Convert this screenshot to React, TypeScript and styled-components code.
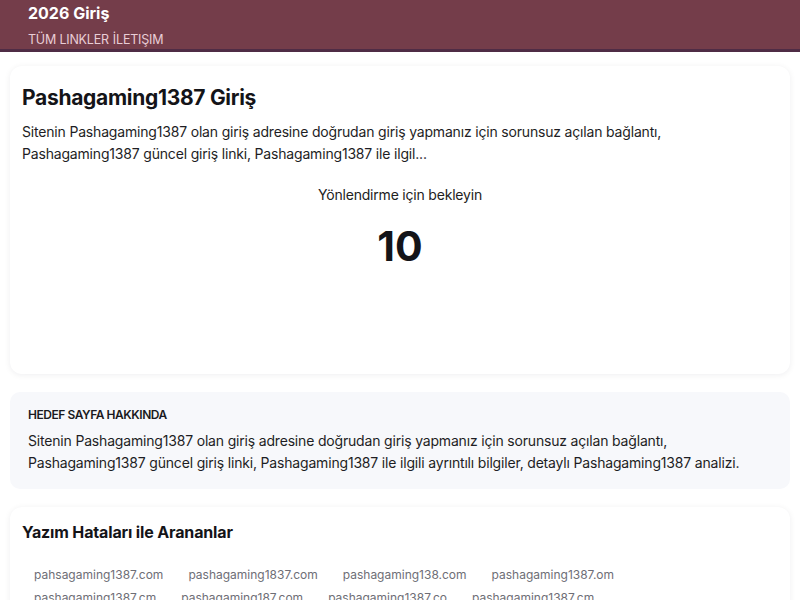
import styled, { createGlobalStyle } from "styled-components";

const GlobalStyle = createGlobalStyle`
  body {
    margin: 0;
    background: #fff;
    font-family: Inter, "Noto Sans", sans-serif;
    color: #1b1b1f;
  }
`;

const typoLinks = [
  "pahsagaming1387.com",
  "pashagaming1837.com",
  "pashagaming138.com",
  "pashagaming1387.om",
  "pashagaming1387.cm",
  "pashagaming187.com",
  "pashagaming1387.co",
  "pashagaming1387.cm",
];

const intro =
  "Sitenin Pashagaming1387 olan giriş adresine doğrudan giriş yapmanız için sorunsuz açılan bağlantı, Pashagaming1387 güncel giriş linki, Pashagaming1387 ile ilgil...";

const about =
  "Sitenin Pashagaming1387 olan giriş adresine doğrudan giriş yapmanız için sorunsuz açılan bağlantı, Pashagaming1387 güncel giriş linki, Pashagaming1387 ile ilgili ayrıntılı bilgiler, detaylı Pashagaming1387 analizi.";

const App = () => {
  return (
    <>
      <GlobalStyle />
      <StyledHeader>
        <StyledBrand>2026 Giriş</StyledBrand>
        <StyledNav>
          <StyledNavLink>Tüm Linkler</StyledNavLink>
          <StyledNavLink>İletişim</StyledNavLink>
        </StyledNav>
      </StyledHeader>

      <StyledMain>
        <StyledCard>
          <StyledTitle>Pashagaming1387 Giriş</StyledTitle>
          <StyledText>{intro}</StyledText>
          <StyledRedirect>
            <StyledWait>Yönlendirme için bekleyin</StyledWait>
            <StyledCounter>10</StyledCounter>
          </StyledRedirect>
        </StyledCard>

        <StyledInfoBox>
          <StyledLabel>Hedef Sayfa Hakkında</StyledLabel>
          <StyledText>{about}</StyledText>
        </StyledInfoBox>

        <StyledCard $compact>
          <StyledSubtitle>Yazım Hataları ile Arananlar</StyledSubtitle>
          <StyledTags>
            {typoLinks.map((link, i) => (
              <StyledTag key={i}>{link}</StyledTag>
            ))}
          </StyledTags>
        </StyledCard>
      </StyledMain>
    </>
  );
};

export default App;

const StyledHeader = styled.header`
  background: #743d4a;
  border-bottom: 3px solid #4f2c45;
  padding: 3px 28px 0;
  height: 46px;
  box-sizing: content-box;
`;

const StyledBrand = styled.div`
  color: #fff;
  font-size: 16px;
  font-weight: 700;
  line-height: 20px;
`;

const StyledNav = styled.nav`
  display: flex;
  gap: 4px;
  margin-top: 9px;
`;

const StyledNavLink = styled.a`
  color: #e9cdd6;
  font-size: 12.5px;
  text-transform: uppercase;
  line-height: 16px;
  letter-spacing: -0.2px;
`;

const StyledMain = styled.main`
  display: flex;
  flex-direction: column;
  gap: 18px;
  padding: 14px 10px 0;
`;

const StyledCard = styled.section<{ $compact?: boolean }>`
  background: #fff;
  border-radius: 12px;
  box-shadow: 0 1px 6px rgba(20, 20, 40, 0.07);
  padding: ${({ $compact }) => ($compact ? "13px 12px 12px" : "18px 12px 12px")};
`;

const StyledTitle = styled.h1`
  margin: 0 0 9px;
  font-size: 21px;
  font-weight: 700;
  line-height: 28px;
  letter-spacing: -0.3px;
  color: #141418;
`;

const StyledText = styled.p`
  margin: 0;
  max-width: 736px;
  font-size: 14px;
  line-height: 22px;
  letter-spacing: -0.18px;
  color: #1e1e24;
`;

const StyledRedirect = styled.div`
  display: flex;
  flex-direction: column;
  align-items: center;
  padding: 20px 0 90px;
`;

const StyledWait = styled.div`
  font-size: 14px;
  line-height: 20px;
  letter-spacing: -0.2px;
  color: #222;
`;

const StyledCounter = styled.div`
  margin-top: 15px;
  font-size: 41px;
  font-weight: 700;
  line-height: 52px;
  color: #141418;
`;

const StyledInfoBox = styled.section`
  background: #f7f8fb;
  border-radius: 10px;
  padding: 15px 18px 15px;
`;

const StyledLabel = styled.div`
  font-size: 12px;
  font-weight: 600;
  text-transform: uppercase;
  line-height: 16px;
  margin-bottom: 7px;
  color: #1a1a20;
  letter-spacing: -0.45px;
`;

const StyledSubtitle = styled.h2`
  margin: 0;
  font-size: 16px;
  font-weight: 700;
  line-height: 24px;
  letter-spacing: -0.15px;
  color: #141418;
`;

const StyledTags = styled.div`
  display: flex;
  flex-wrap: wrap;
  gap: 3px 1px;
  max-width: 640px;
  margin-top: 21px;
`;

const StyledTag = styled.a`
  padding: 0 12px;
  font-size: 12px;
  line-height: 20px;
  color: #6e6e76;
`;
